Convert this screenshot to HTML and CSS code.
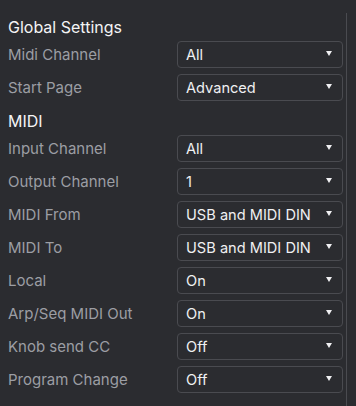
FILE: index.html
```html
<!DOCTYPE html>
<html>
<head>
<meta charset="utf-8">
<link rel="stylesheet" href="styles.css">
</head>
<body>
<div class="panel">
  <div class="section">
    <div class="heading">Global Settings</div>
    <div class="row"><span class="label">Midi Channel</span><div class="select"><span>All</span><svg class="arrow" width="6" height="5" viewBox="0 0 6 5"><path d="M0 0H6L3 5Z"/></svg></div></div>
    <div class="row"><span class="label">Start Page</span><div class="select"><span>Advanced</span><svg class="arrow" width="6" height="5" viewBox="0 0 6 5"><path d="M0 0H6L3 5Z"/></svg></div></div>
  </div>
  <div class="section second">
    <div class="heading">MIDI</div>
    <div class="row"><span class="label">Input Channel</span><div class="select"><span>All</span><svg class="arrow" width="6" height="5" viewBox="0 0 6 5"><path d="M0 0H6L3 5Z"/></svg></div></div>
    <div class="row"><span class="label">Output Channel</span><div class="select"><span>1</span><svg class="arrow" width="6" height="5" viewBox="0 0 6 5"><path d="M0 0H6L3 5Z"/></svg></div></div>
    <div class="row"><span class="label">MIDI From</span><div class="select"><span>USB and MIDI DIN</span><svg class="arrow" width="6" height="5" viewBox="0 0 6 5"><path d="M0 0H6L3 5Z"/></svg></div></div>
    <div class="row"><span class="label">MIDI To</span><div class="select"><span>USB and MIDI DIN</span><svg class="arrow" width="6" height="5" viewBox="0 0 6 5"><path d="M0 0H6L3 5Z"/></svg></div></div>
    <div class="row"><span class="label">Local</span><div class="select"><span>On</span><svg class="arrow" width="6" height="5" viewBox="0 0 6 5"><path d="M0 0H6L3 5Z"/></svg></div></div>
    <div class="row"><span class="label">Arp/Seq MIDI Out</span><div class="select"><span>On</span><svg class="arrow" width="6" height="5" viewBox="0 0 6 5"><path d="M0 0H6L3 5Z"/></svg></div></div>
    <div class="row"><span class="label">Knob send CC</span><div class="select"><span>Off</span><svg class="arrow" width="6" height="5" viewBox="0 0 6 5"><path d="M0 0H6L3 5Z"/></svg></div></div>
    <div class="row"><span class="label">Program Change</span><div class="select"><span>Off</span><svg class="arrow" width="6" height="5" viewBox="0 0 6 5"><path d="M0 0H6L3 5Z"/></svg></div></div>
  </div>
</div>
</body>
</html>
```
FILE: styles.css
```css
html, body {
  margin: 0;
  padding: 0;
  background: #2b2c30;
  height: 100%;
  overflow: hidden;
}
body {
  font-family: Inter, "Noto Sans", sans-serif;
}
.panel {
  box-sizing: border-box;
  width: 347px;
  margin-top: 13px;
  height: 393px;
  padding: 4px 3px 0 8px;
  border-right: 1px solid #4a4b50;
}
.section {
  display: flex;
  flex-direction: column;
  gap: 6px;
}
.section.second {
  margin-top: 10px;
}
.heading {
  height: 20px;
  line-height: 20px;
  font-size: 16px;
  font-weight: 400;
  color: #f4f4f5;
  margin-bottom: -2px;
}
.row {
  display: grid;
  grid-template-columns: 169px 166px;
  align-items: center;
  height: 27px;
}
.label {
  font-size: 15px;
  color: #9c9ea4;
}
.select {
  box-sizing: border-box;
  height: 27px;
  border: 1px solid #4a4b50;
  border-radius: 4px;
  display: flex;
  align-items: center;
  justify-content: space-between;
  padding: 0 10px 0 8px;
  font-size: 14.6px;
  color: #f0f0f2;
}
.arrow {
  fill: #f0f0f2;
  margin-top: -3px;
}
```
